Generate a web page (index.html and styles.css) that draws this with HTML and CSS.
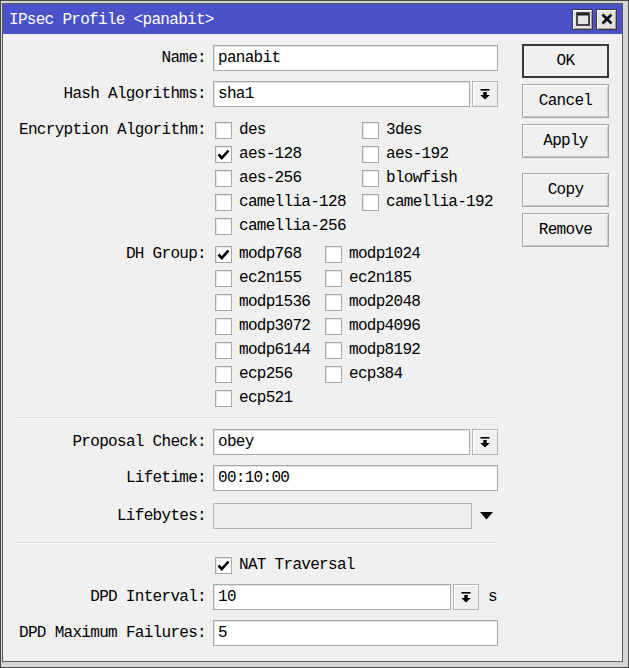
FILE: index.html
```html
<!DOCTYPE html>
<html>
<head>
<meta charset="utf-8">
<link rel="stylesheet" href="styles.css">
</head>
<body>
<div class="window">
  <div class="frame">
    <div class="titlebar">
      <span class="title">IPsec Profile &lt;panabit&gt;</span>
      <div class="tb-buttons">
        <span class="tb-btn"><svg width="14" height="14" viewBox="0 0 14 14"><rect x="1" y="1" width="12" height="12" fill="none" stroke="#222" stroke-width="1.6"/><rect x="1" y="1" width="12" height="2.5" fill="#222"/></svg></span>
        <span class="tb-btn"><svg width="14" height="14" viewBox="0 0 14 14"><path d="M2.5 2.5L11.5 11.5M11.5 2.5L2.5 11.5" stroke="#111" stroke-width="2.8"/></svg></span>
      </div>
    </div>
    <div class="content">
      <div class="form">
        <div class="row">
          <span class="lbl">Name:</span>
          <div class="field"><div class="input">panabit</div></div>
        </div>
        <div class="row r-hash">
          <span class="lbl">Hash Algorithms:</span>
          <div class="field">
            <div class="input w-dd">sha1</div>
            <span class="dd"><svg width="10" height="11" viewBox="0 0 10 11"><rect x="0.5" y="0" width="9" height="1.6"/><path d="M3.3 3h3.4v3h3.1L5 10.6 0.2 6h3.1z"/></svg></span>
          </div>
        </div>
        <div class="row r-enc top">
          <span class="lbl lbl-top">Encryption Algorithm:</span>
          <div class="field">
            <div class="checks enc">
              <label class="cb"><span class="box"></span>des</label>
              <label class="cb"><span class="box"></span>3des</label>
              <label class="cb"><span class="box on"><svg width="15" height="15" viewBox="0 0 15 15"><path d="M2.5 7.5L5.8 11L12.5 3.5" fill="none" stroke="#000" stroke-width="2.6"/></svg></span>aes-128</label>
              <label class="cb"><span class="box"></span>aes-192</label>
              <label class="cb"><span class="box"></span>aes-256</label>
              <label class="cb"><span class="box"></span>blowfish</label>
              <label class="cb"><span class="box"></span>camellia-128</label>
              <label class="cb"><span class="box"></span>camellia-192</label>
              <label class="cb"><span class="box"></span>camellia-256</label>
            </div>
          </div>
        </div>
        <div class="row r-dh top">
          <span class="lbl lbl-top">DH Group:</span>
          <div class="field">
            <div class="checks dh">
              <label class="cb"><span class="box on"><svg width="15" height="15" viewBox="0 0 15 15"><path d="M2.5 7.5L5.8 11L12.5 3.5" fill="none" stroke="#000" stroke-width="2.6"/></svg></span>modp768</label>
              <label class="cb"><span class="box"></span>modp1024</label>
              <label class="cb"><span class="box"></span>ec2n155</label>
              <label class="cb"><span class="box"></span>ec2n185</label>
              <label class="cb"><span class="box"></span>modp1536</label>
              <label class="cb"><span class="box"></span>modp2048</label>
              <label class="cb"><span class="box"></span>modp3072</label>
              <label class="cb"><span class="box"></span>modp4096</label>
              <label class="cb"><span class="box"></span>modp6144</label>
              <label class="cb"><span class="box"></span>modp8192</label>
              <label class="cb"><span class="box"></span>ecp256</label>
              <label class="cb"><span class="box"></span>ecp384</label>
              <label class="cb"><span class="box"></span>ecp521</label>
            </div>
          </div>
        </div>
        <div class="sep sep1"></div>
        <div class="row r-prop">
          <span class="lbl">Proposal Check:</span>
          <div class="field">
            <div class="input w-dd">obey</div>
            <span class="dd"><svg width="10" height="11" viewBox="0 0 10 11"><rect x="0.5" y="0" width="9" height="1.6"/><path d="M3.3 3h3.4v3h3.1L5 10.6 0.2 6h3.1z"/></svg></span>
          </div>
        </div>
        <div class="row r-life">
          <span class="lbl">Lifetime:</span>
          <div class="field"><div class="input">00:10:00</div></div>
        </div>
        <div class="row r-bytes">
          <span class="lbl">Lifebytes:</span>
          <div class="field">
            <div class="input disabled w-tri"></div>
            <span class="tri"><svg width="13" height="8" viewBox="0 0 13 8"><path d="M0 0h13L6.5 7.5z"/></svg></span>
          </div>
        </div>
        <div class="sep sep2"></div>
        <div class="row r-nat">
          <span class="lbl"></span>
          <div class="field">
            <label class="cb"><span class="box on"><svg width="15" height="15" viewBox="0 0 15 15"><path d="M2.5 7.5L5.8 11L12.5 3.5" fill="none" stroke="#000" stroke-width="2.6"/></svg></span>NAT Traversal</label>
          </div>
        </div>
        <div class="row r-dpd">
          <span class="lbl">DPD Interval:</span>
          <div class="field">
            <div class="input w-dpd">10</div>
            <span class="dd"><svg width="10" height="11" viewBox="0 0 10 11"><rect x="0.5" y="0" width="9" height="1.6"/><path d="M3.3 3h3.4v3h3.1L5 10.6 0.2 6h3.1z"/></svg></span>
            <span class="unit">s</span>
          </div>
        </div>
        <div class="row r-max">
          <span class="lbl">DPD Maximum Failures:</span>
          <div class="field"><div class="input">5</div></div>
        </div>
      </div>
      <div class="buttons">
        <span class="btn default">OK</span>
        <span class="btn">Cancel</span>
        <span class="btn">Apply</span>
        <span class="btn gap">Copy</span>
        <span class="btn">Remove</span>
      </div>
    </div>
  </div>
</div>
</body>
</html>
```
FILE: styles.css
```css
* { box-sizing: border-box; }
html, body { margin: 0; padding: 0; }
body {
  width: 629px;
  height: 668px;
  overflow: hidden;
  font-family: "Liberation Mono", monospace;
  font-size: 16px;
  letter-spacing: -0.7px;
  color: #000;
  background: #9a9a9a;
}
.window {
  width: 629px;
  height: 668px;
  background: #d6d6d6;
  border: 1px solid #4a4a4a;
  padding: 2px 5px 5px 1px;
  display: flex;
}
.frame {
  flex: 1;
  border: 1px solid #5c5c5c;
  background: #f0f0f0;
  display: flex;
  flex-direction: column;
}
.titlebar {
  height: 30px;
  background: #4a51c9;
  display: flex;
  align-items: center;
  justify-content: space-between;
  padding: 0 5px 0 6px;
  color: #fff;
}
.title { line-height: 30px; padding-top: 1px; }
.tb-buttons { display: flex; gap: 3px; }
.tb-btn {
  width: 21px;
  height: 21px;
  background: #e4e4e4;
  border: 1px solid #3a3a3a;
  box-shadow: inset 1px 1px 0 #fff, inset -1px -1px 0 #a0a0a0;
  display: flex;
  align-items: center;
  justify-content: center;
}
.content {
  flex: 1;
  display: flex;
  align-items: flex-start;
  padding: 11px 0 0 13px;
}
.form {
  width: 482px;
  display: flex;
  flex-direction: column;
}
.row {
  display: flex;
  align-items: center;
  gap: 7px;
}
.row.top { align-items: flex-start; }
.lbl {
  width: 190px;
  text-align: right;
  white-space: nowrap;
}
.lbl-top { line-height: 24px; }
.field {
  width: 285px;
  display: flex;
  align-items: center;
}
.input {
  height: 26px;
  width: 100%;
  background: #fff;
  border: 1px solid #a9a9a9;
  box-shadow: inset 1px 1px 0 #e2e2e2;
  padding: 0 4px;
  line-height: 24px;
  white-space: nowrap;
}
.input.w-dd { width: 257px; }
.input.w-dpd { width: 238px; }
.input.w-tri { width: 259px; }
.input.disabled { background: #ededed; border-color: #b8b8b8; box-shadow: none; }
.dd {
  width: 26px;
  height: 26px;
  margin-left: 2px;
  border: 1px solid #b4b4b4;
  box-shadow: inset 1px 1px 0 #fff;
  background: #efefef;
  display: flex;
  align-items: center;
  justify-content: center;
}
.tri { margin-left: 8px; display: flex; }
.unit { margin-left: 9px; }
.sep {
  height: 2px;
  border-top: 1px solid #d9d9d9;
  border-bottom: 1px solid #fafafa;
}
.checks { display: grid; }
.checks.enc { grid-template-columns: 147px auto; }
.checks.dh { grid-template-columns: 110px auto; }
.cb {
  height: 24px;
  display: flex;
  align-items: center;
  gap: 7px;
  padding-left: 2px;
  white-space: nowrap;
}
.box {
  width: 17px;
  height: 17px;
  background: #fff;
  border: 1px solid #a8a8a8;
  box-shadow: inset 1px 1px 0 #e4e4e4;
  display: flex;
  align-items: center;
  justify-content: center;
  flex: none;
}
.r-hash { margin-top: 10px; }
.r-enc { margin-top: 11px; }
.r-dh { margin-top: 4px; }
.sep1 { margin-top: 7px; }
.r-prop { margin-top: 10px; }
.r-life { margin-top: 10px; }
.r-bytes { margin-top: 12px; }
.sep2 { margin-top: 13px; }
.r-nat { margin-top: 9px; }
.r-dpd { margin-top: 7px; }
.r-max { margin-top: 10px; }
.buttons {
  margin-top: -1px;
  margin-left: 24px;
  width: 87px;
  display: flex;
  flex-direction: column;
  gap: 6px;
}
.btn {
  height: 34px;
  border: 1px solid #a6a6a6;
  box-shadow: inset 1px 1px 0 #fff, inset -1px -1px 0 #c8c8c8;
  background: #f0f0f0;
  display: flex;
  align-items: center;
  justify-content: center;
}
.btn.default { border: 2px solid #3a3a3a; box-shadow: none; height: 34px; }
.btn.gap { margin-top: 9px; }
```
